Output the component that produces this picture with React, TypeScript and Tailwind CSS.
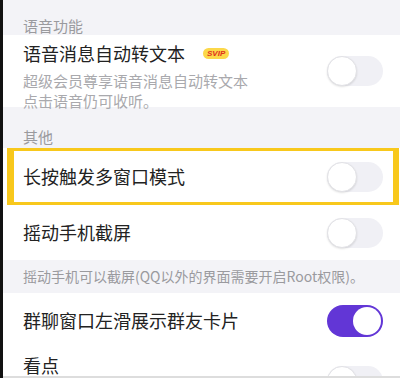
const font = { fontFamily: '"Noto Sans CJK SC", "Noto Sans", sans-serif' };

function Toggle({ on = false }: { on?: boolean }) {
  return on ? (
    <div className="flex h-[32px] w-[56px] items-center justify-end rounded-full bg-[#6236d6] p-[2px]">
      <div className="h-[28px] w-[28px] rounded-full bg-white" />
    </div>
  ) : (
    <div className="flex h-[30px] w-[56px] items-center rounded-full bg-[#f0f0f5]">
      <div className="h-[30px] w-[30px] rounded-full border border-[#e2e2e6] bg-white shadow-[0_1px_2px_rgba(0,0,0,0.12)]" />
    </div>
  );
}

function Row({ title, on, h }: { title: string; on?: boolean; h: string }) {
  return (
    <div className={`flex items-center justify-between bg-white pl-[20px] pr-[17px] ${h}`}>
      <span className="text-[18px] text-[#222]">{title}</span>
      <Toggle on={on} />
    </div>
  );
}

export default function App() {
  return (
    <div className="flex h-[378px] w-[400px] overflow-hidden bg-[#f3f3f7]" style={font}>
      <div className="w-[3px] shrink-0 bg-[#111]" />
      <div className="flex flex-1 flex-col">
        <div className="flex h-[35px] items-end pb-[2px] pl-[20px] text-[15px] leading-[15px] text-[#9a9a9e]">语音功能</div>

        <div className="flex h-[72px] justify-between bg-white pl-[20px] pr-[17px]">
          <div className="flex flex-col pt-[5px]">
            <div className="flex h-[26px] items-center">
              <span className="text-[18px] leading-[26px] text-[#222]">语音消息自动转文本</span>
              <span className="ml-[18px] rounded-full bg-[#fcd84a] px-[4px] text-[8px] font-black italic leading-[11px] text-[#e0301e]" style={{ fontFamily: '"Liberation Sans", sans-serif' }}>
                SVIP
              </span>
            </div>
            <p className="mt-[5px] text-[15px] leading-[20px] text-[#a9a9ad]">
              超级会员尊享语音消息自动转文本
              <br />
              点击语音仍可收听。
            </p>
          </div>
          <div className="self-center">
            <Toggle />
          </div>
        </div>

        <div className="flex h-[41px] items-end pb-[4px] pl-[20px] text-[15px] leading-[15px] text-[#9a9a9e]">其他</div>

        <div className="relative">
          <Row title="长按触发多窗口模式" h="h-[57px]" />
          <div className="pointer-events-none absolute inset-y-0 left-[4px] right-[1px] border-y-[3px] border-l-[7px] border-r-[6px] border-[#f8c81c]" />
        </div>
        <Row title="摇动手机截屏" h="h-[55px]" />

        <div className="flex h-[33px] items-center pl-[20px] text-[14px] text-[#9a9a9e]">
          摇动手机可以截屏(QQ以外的界面需要开启Root权限)。
        </div>

        <Row title="群聊窗口左滑展示群友卡片" on h="h-[55px]" />
        <div className="flex h-[28px] shrink-0 items-start justify-between bg-white pl-[20px] pr-[17px] pt-[8px]">
          <span className="text-[18px] leading-[18px] text-[#222]">看点</span>
          <div className="mt-[10px]">
            <Toggle />
          </div>
        </div>
        <div className="h-[2px] bg-[#ddd]" />
      </div>
    </div>
  );
}
